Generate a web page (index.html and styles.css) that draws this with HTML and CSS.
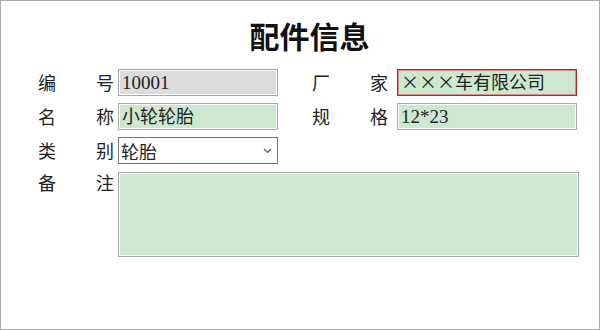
FILE: index.html
```html
<!DOCTYPE html>
<html lang="zh-CN">
  <head>
    <meta charset="UTF-8" />
    <meta name="viewport" content="width=device-width, initial-scale=1.0" />
    <title>配件信息</title>
    <link rel="stylesheet" href="styles.css">
  </head>
  <body>
    <div class="page">
      <div class="panel">
        <h1 class="title">配件信息</h1>
        <div class="form">
          <label class="label" for="code">编号</label>
          <input class="field readonly" id="code" type="text" value="10001" readonly />
          <label class="label right" for="maker">厂家</label>
          <input class="field cjk invalid" id="maker" type="text" value="×××车有限公司" />

          <label class="label" for="name">名称</label>
          <input class="field cjk" id="name" type="text" value="小轮轮胎" />
          <label class="label right" for="spec">规格</label>
          <input class="field" id="spec" type="text" value="12*23" />

          <label class="label" for="kind">类别</label>
          <div class="select-wrap">
            <select class="select" id="kind">
              <option>轮胎</option>
              <option>轮毂</option>
              <option>刹车片</option>
            </select>
            <svg class="chevron" width="9" height="6" viewBox="0 0 9 6">
              <path d="M1 1 L4.5 4.5 L8 1" fill="none" stroke="#555" stroke-width="1.2" />
            </svg>
          </div>
          <span></span>
          <span></span>

          <label class="label top" for="note">备注</label>
          <textarea class="field note" id="note"></textarea>
        </div>
      </div>
    </div>
  </body>
</html>
```

FILE: styles.css
```css
* {
  margin: 0;
  padding: 0;
  box-sizing: border-box;
}

body {
  font-family: "Noto Sans CJK SC", sans-serif;
  color: #222;
  background: #fff;
}

.page {
  width: 600px;
  height: 330px;
  border: 1px solid #ababab;
}

.panel {
  width: 543px;
  margin-left: 37px;
}

.title {
  font-size: 30px;
  line-height: 36px;
  font-weight: bold;
  text-align: center;
  color: #111;
  padding-top: 16px;
  margin-bottom: 16px;
}

.form {
  display: grid;
  grid-template-columns: 80px 160px 119px 180px;
  row-gap: 7px;
  align-items: center;
}

.label {
  font-size: 18px;
  line-height: 27px;
  text-align: justify;
  text-align-last: justify;
  padding-right: 4px;
  color: #222;
}

.label.right {
  padding-left: 34px;
  padding-right: 9px;
}

.label.top {
  align-self: start;
  margin-top: -2px;
}

.field {
  height: 27px;
  width: 100%;
  font-family: "Liberation Serif", "Noto Sans CJK SC", serif;
  font-size: 19px;
  color: #222;
  padding: 0 3px;
  background: #cde8cf;
  border: 1px solid #a9a9a9;
  box-shadow: inset 0 0 0 1px #fff;
  outline: none;
}

.field.cjk {
  font-family: "Noto Sans CJK SC", sans-serif;
  font-size: 18px;
  padding-bottom: 3px;
}

.field.readonly {
  background: #dcdcdc;
}

.field.invalid {
  border-color: #b32626;
  box-shadow: inset 0 0 0 1px #d98c8c;
}

.select-wrap {
  position: relative;
  height: 27px;
}

.select {
  appearance: none;
  -webkit-appearance: none;
  width: 100%;
  height: 27px;
  font-family: "Noto Sans CJK SC", sans-serif;
  font-size: 18px;
  color: #222;
  padding: 0 2px 3px;
  background: #fff;
  border: 1px solid #767676;
  border-radius: 0;
  outline: none;
}

.chevron {
  position: absolute;
  right: 6px;
  top: 11px;
}

.note {
  grid-column: 2 / 5;
  height: 85px;
  width: 461px;
  resize: none;
  margin-top: 1px;
}
```
